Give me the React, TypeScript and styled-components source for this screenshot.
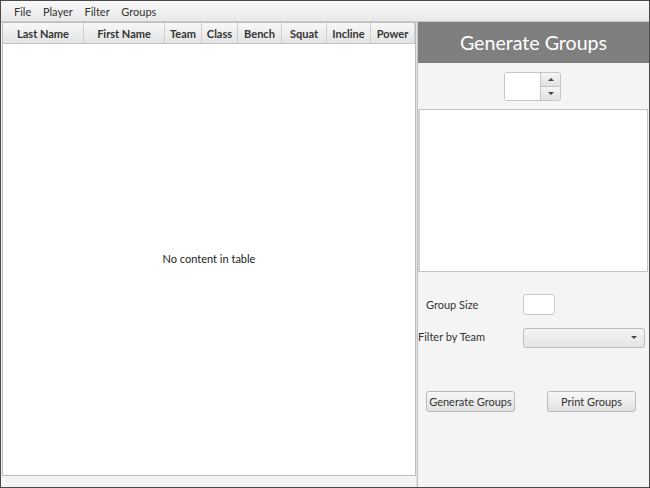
import React from 'react'

import styled, { createGlobalStyle } from 'styled-components'

const GlobalStyle = createGlobalStyle`
  html, body {
    margin: 0;
    padding: 0;
    background: #f4f4f4;
  }
  * {
    box-sizing: border-box;
  }
`

const columns = [
  { name: 'Last Name', width: 81 },
  { name: 'First Name', width: 81 },
  { name: 'Team', width: 37 },
  { name: 'Class', width: 36 },
  { name: 'Bench', width: 44 },
  { name: 'Squat', width: 45 },
  { name: 'Incline', width: 44 },
  { name: 'Power', width: 44 },
]

const menus = ['File', 'Player', 'Filter', 'Groups']

export default function App() {
  return (
    <>
      <GlobalStyle />
      <Window>
        <MenuBar>
          {menus.map((m) => (
            <MenuItem key={m}>{m}</MenuItem>
          ))}
        </MenuBar>
        <Main>
          <LeftPane>
            <Table>
              <HeaderRow>
                {columns.map((c) => (
                  <HeaderCell key={c.name} style={{ width: c.width }}>
                    {c.name}
                  </HeaderCell>
                ))}
                <HeaderFiller />
              </HeaderRow>
              <TableBody>No content in table</TableBody>
            </Table>
          </LeftPane>
          <RightPane>
            <Title>Generate Groups</Title>
            <SpinnerRow>
              <Spinner>
                <SpinnerField />
                <SpinnerButtons>
                  <SpinButton>
                    <Arrow up />
                  </SpinButton>
                  <SpinButton>
                    <Arrow />
                  </SpinButton>
                </SpinnerButtons>
              </Spinner>
            </SpinnerRow>
            <ListBox />
            <Form>
              <Label indent>Group Size</Label>
              <SmallField />
              <Label>Filter by Team</Label>
              <Combo>
                <Arrow />
              </Combo>
            </Form>
            <ButtonRow>
              <Button>Generate Groups</Button>
              <Button>Print Groups</Button>
            </ButtonRow>
          </RightPane>
        </Main>
      </Window>
    </>
  )
}

const Window = styled.div`
  width: 650px;
  height: 488px;
  border: 1px solid #4a4a4a;
  display: flex;
  flex-direction: column;
  background: #f4f4f4;
  font-family: Lato, 'Liberation Sans', sans-serif;
  font-size: 11px;
  color: #333;
  overflow: hidden;
`

const MenuBar = styled.div`
  height: 21px;
  display: flex;
  align-items: center;
  padding-left: 7px;
  background: linear-gradient(#f7f7f7, #e9e9e9);
  border-bottom: 1px solid #c8c8c8;
`

const MenuItem = styled.div`
  padding: 0 5.7px 0 6px;
  color: #333;
`

const Main = styled.div`
  flex: 1;
  display: flex;
  min-height: 0;
`

const LeftPane = styled.div`
  width: 416px;
  padding: 0 0 11px 1px;
  display: flex;
  flex-direction: column;
  border-right: 1px solid #e0e0e0;
`

const Table = styled.div`
  flex: 1;
  display: flex;
  flex-direction: column;
  border: 1px solid #bdbdbd;
  background: #fff;
`

const HeaderRow = styled.div`
  height: 21px;
  display: flex;
  background: linear-gradient(#f8f8f8, #e3e3e3);
  border-bottom: 1px solid #c3c3c3;
`

const HeaderCell = styled.div`
  flex-shrink: 0;
  display: flex;
  align-items: center;
  justify-content: center;
  font-weight: bold;
  color: #333;
  border-right: 1px solid #cfcfcf;
`

const HeaderFiller = styled.div`
  flex: 1;
`

const TableBody = styled.div`
  flex: 1;
  display: flex;
  align-items: center;
  justify-content: center;
  padding-bottom: 2px;
  color: #222;
`

const RightPane = styled.div`
  flex: 1;
  display: flex;
  flex-direction: column;
  border-left: 1px solid #c4c4c4;
`

const Title = styled.div`
  height: 41px;
  background: #7f7f7f;
  color: #fff;
  font-size: 19.6px;
  display: flex;
  align-items: center;
  justify-content: center;
  padding-bottom: 1px;
`

const SpinnerRow = styled.div`
  height: 46px;
  display: flex;
  align-items: center;
  justify-content: center;
  padding-right: 2px;
`

const Spinner = styled.div`
  width: 57px;
  height: 29px;
  display: flex;
  border: 1px solid #c5c5c5;
  border-radius: 3px;
  background: #fff;
  overflow: hidden;
`

const SpinnerField = styled.div`
  flex: 1;
  background: #fff;
`

const SpinnerButtons = styled.div`
  width: 20px;
  display: flex;
  flex-direction: column;
  border-left: 1px solid #c5c5c5;
`

const SpinButton = styled.div`
  flex: 1;
  display: flex;
  align-items: center;
  justify-content: center;
  background: linear-gradient(#f4f4f4, #e2e2e2);
  & + & {
    border-top: 1px solid #c5c5c5;
  }
`

const Arrow = styled.span<{ up?: boolean }>`
  width: 0;
  height: 0;
  border-left: 3px solid transparent;
  border-right: 3px solid transparent;
  ${({ up }) => (up ? 'border-bottom: 3px solid #444;' : 'border-top: 3px solid #444;')}
`

const ListBox = styled.div`
  height: 163px;
  margin: 0 1px 0 0;
  background: #fff;
  border: 1px solid #c4c4c4;
  border-left-width: 2px;
  border-left-color: #d0d0d0;
`

const Form = styled.div`
  margin-top: 22px;
  display: grid;
  grid-template-columns: 105px 122px;
  grid-auto-rows: 21px;
  row-gap: 12px;
  align-items: center;
`

const Label = styled.div<{ indent?: boolean }>`
  padding-left: ${({ indent }) => (indent ? '8px' : '0')};
  padding-bottom: ${({ indent }) => (indent ? '0' : '2px')};
  color: #333;
`

const SmallField = styled.div`
  width: 32px;
  height: 21px;
  background: #fff;
  border: 1px solid #c8c8c8;
  border-radius: 3px;
`

const Combo = styled.div`
  height: 20px;
  display: flex;
  align-items: center;
  justify-content: flex-end;
  padding-right: 7px;
  background: linear-gradient(#f4f4f4, #e4e4e4);
  border: 1px solid #bdbdbd;
  border-radius: 3px;
`

const ButtonRow = styled.div`
  margin-top: 43px;
  display: flex;
  justify-content: space-between;
  padding: 0 13px 0 8px;
`

const Button = styled.div`
  width: 89px;
  height: 21px;
  display: flex;
  align-items: center;
  justify-content: center;
  background: linear-gradient(#f7f7f7, #e2e2e2);
  border: 1px solid #b9b9b9;
  border-radius: 3px;
  color: #333;
`
